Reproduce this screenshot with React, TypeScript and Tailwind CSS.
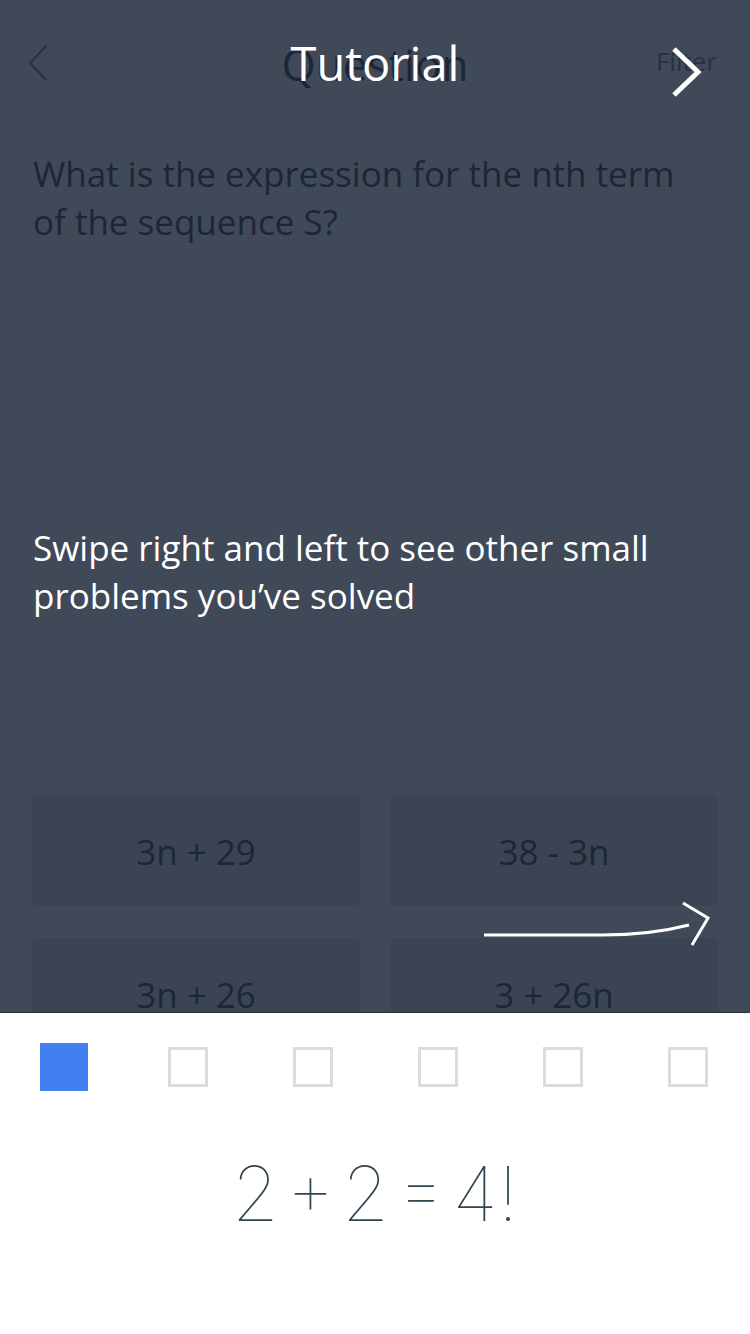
import React from 'react'

// ---------------------------------------------------------------------------
// Data
// ---------------------------------------------------------------------------

const answers = ['3n + 29', '38 - 3n', '3n + 26', '3 + 26n']

const steps = [true, false, false, false, false, false]

// ---------------------------------------------------------------------------
// Background screen (dimmed by the tutorial overlay)
// ---------------------------------------------------------------------------

function QuestionScreen() {
  return (
    <div className="flex h-[1013px] flex-col overflow-hidden border-b border-[#2b3341] bg-[#404958]">
      <header className="relative flex h-[128px] shrink-0 items-center justify-center">
        <svg
          className="absolute left-[26px] top-[44px]"
          width="24"
          height="38"
          viewBox="0 0 24 38"
          fill="none"
          stroke="#283142"
          strokeWidth="2"
        >
          <path d="M20 2 L4 19 L20 36" />
        </svg>
        <h1 className="text-[44px] leading-none text-[#1c2636]">Question</h1>
        <span className="absolute right-[33px] top-[48px] text-[26px] leading-none text-[#283142]">
          Filter
        </span>
      </header>

      <p className="shrink-0 pl-[33px] pr-[48px] pt-[22px] text-[35px] leading-[48px] text-[#1c2637]">
        What is the expression for the nth term of the sequence S?
      </p>

      <div className="mt-[549px] grid shrink-0 grid-cols-2 gap-x-[30px] gap-y-[32px] px-[32px]">
        {answers.map((a) => (
          <div
            key={a}
            className="flex h-[111px] items-center justify-center rounded-md bg-[#3b4452] pt-[3px] text-[35px] text-[#1c2637]"
          >
            {a}
          </div>
        ))}
      </div>
    </div>
  )
}

// ---------------------------------------------------------------------------
// Tutorial overlay
// ---------------------------------------------------------------------------

function TutorialOverlay() {
  return (
    <>
      <h2 className="absolute left-0 right-0 top-[40px] text-center text-[47px] leading-none text-white">
        Tutorial
      </h2>
      <svg
        className="absolute left-[668px] top-[46px]"
        width="36"
        height="52"
        viewBox="0 0 36 52"
        fill="none"
        stroke="white"
        strokeWidth="5"
      >
        <path d="M6 3 L30 26 L6 49" />
      </svg>
      <p className="absolute left-[33px] top-[524px] w-[690px] text-[35px] leading-[48px] text-white">
        Swipe right and left to see other small problems you’ve solved
      </p>
      <svg
        className="absolute left-[482px] top-[898px]"
        width="232"
        height="52"
        viewBox="0 0 232 52"
        fill="none"
        stroke="white"
        strokeWidth="3"
      >
        <path d="M2 37 L120 37 C150 37 180 34 207 27" />
        <path d="M201 5 L226 20 L210 47" />
      </svg>
    </>
  )
}

// ---------------------------------------------------------------------------
// Bottom panel
// ---------------------------------------------------------------------------

function StepPanel() {
  return (
    <div className="h-[321px] bg-white">
      <div className="grid h-[101px] grid-cols-6 items-center pt-[6px]">
        {steps.map((active, i) => (
          <div key={i} className="flex justify-center">
            {active ? (
              <div className="ml-[2px] h-[48px] w-[48px] bg-[#4080f0]" />
            ) : (
              <div className="h-[40px] w-[40px] border-[3px] border-[#dadddc]" />
            )}
          </div>
        ))}
      </div>
      <p className="mt-[41px] text-center font-['Inter',sans-serif] text-[76px] font-thin leading-none text-[#2f4550] [word-spacing:-14px]">
        2 + 2 = 4!
      </p>
    </div>
  )
}

export default function App() {
  return (
    <div className="relative h-[1334px] w-[750px] overflow-hidden font-['Open_Sans',sans-serif]">
      <QuestionScreen />
      <StepPanel />
      <TutorialOverlay />
    </div>
  )
}
